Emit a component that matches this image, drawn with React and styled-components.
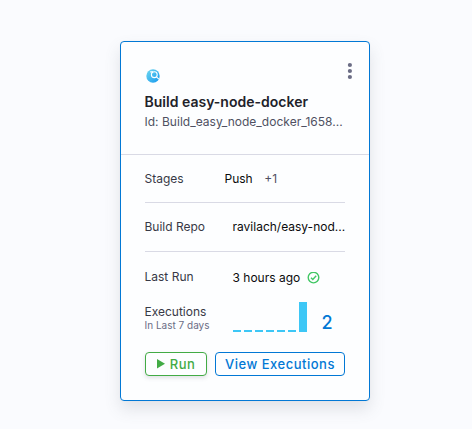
import React from "react";
import styled, { createGlobalStyle } from "styled-components";

const GlobalStyle = createGlobalStyle`
  *, *::before, *::after { box-sizing: border-box; }
  body {
    margin: 0;
    background: #fafbfe;
    font-family: Inter, "Liberation Sans", sans-serif;
    font-size: 12px;
    color: #0b0b0d;
  }
`;

const Page = styled.main`
  height: 429px;
  overflow: hidden;
  padding: 41px 0 0 120px;
`;

const Card = styled.article`
  display: flex;
  flex-direction: column;
  width: 250px;
  height: 360px;
  background: #fdfeff;
  border: 1px solid #0278d5;
  border-radius: 4px;
  box-shadow: 0 0 2px rgba(40, 41, 61, 0.04), 0 8px 16px rgba(96, 97, 112, 0.16);
`;

const Header = styled.header`
  height: 113px;
  padding: 20px 16px 0 24px;
  border-bottom: 1px solid #d9dae5;
`;

const HeaderTop = styled.div`
  display: flex;
  justify-content: space-between;
  height: 30px;
`;

const PipelineIcon = styled.svg`
  width: 14px;
  height: 14px;
  margin: 7px 0 0 1px;
`;

const MenuButton = styled.button`
  display: flex;
  width: 7px;
  height: 18px;
  margin: 0;
  padding: 0;
  border: 0;
  background: none;
`;

const Title = styled.h1`
  margin: 0;
  text-indent: -0.5px;
  font-size: 14px;
  line-height: 20px;
  font-weight: 600;
  letter-spacing: 0.01px;
  color: #22222a;
  white-space: nowrap;
`;

const Identifier = styled.p`
  width: 200px;
  margin: 0;
  text-indent: -0.5px;
  font-size: 12px;
  line-height: 20px;
  letter-spacing: 0.02px;
  color: #4f5162;
  white-space: nowrap;
`;

const Body = styled.div`
  padding: 0 24px;
`;

const Row = styled.div`
  display: flex;
  align-items: center;
  height: ${(p) => p.$height}px;
  border-bottom: ${(p) => (p.$divided ? "1px solid #d9dae5" : "0")};
  white-space: nowrap;
`;

const Label = styled.span`
  flex: none;
  width: ${(p) => p.$width || 88}px;
  padding-top: ${(p) => p.$offset || 0}px;
  text-indent: -0.5px;
  line-height: 16px;
  font-size: 12px;
  color: #383946;
`;

const Value = styled.span`
  font-size: 12px;
  line-height: 16px;
  text-indent: -0.5px;
  color: #0b0b0d;
`;

const MoreStages = styled(Value)`
  margin-left: 12px;
  color: #4f5162;
`;

const LastRun = styled.div`
  display: flex;
  align-items: center;
  gap: 7px;
  padding-top: 2px;
`;

const Caption = styled.small`
  display: block;
  font-size: 10px;
  line-height: 11px;
  color: #6b6d85;
`;

const Chart = styled.div`
  display: flex;
  align-items: flex-end;
  gap: 3px;
  height: 30px;
`;

const Bar = styled.span`
  width: 8px;
  height: ${(p) => (p.$filled ? 30 : 2)}px;
  background: #3dc7f6;
`;

const Total = styled.strong`
  margin: 12px 0 0 14.5px;
  font-size: 18px;
  line-height: 22px;
  font-weight: 500;
  color: #0278d5;
`;

const Actions = styled.footer`
  display: flex;
  gap: 8px;
  padding-top: 20px;
`;

const Button = styled.button`
  display: flex;
  align-items: center;
  justify-content: center;
  gap: 5px;
  width: ${(p) => (p.$run ? 62 : 130)}px;
  height: 24px;
  margin: 0;
  padding: 0;
  font: 500 13px/16px Inter, "Liberation Sans", sans-serif;
  letter-spacing: 0.5px;
  white-space: nowrap;
  color: ${(p) => (p.$run ? "#42ab45" : "#0278d5")};
  background: #fdfeff;
  border: 1px solid currentColor;
  border-radius: 4px;
  box-shadow: ${(p) => (p.$run ? "0 2px 4px rgba(96, 97, 112, 0.18)" : "none")};
`;

const days = [0, 0, 0, 0, 0, 0, 2];

export default function App() {
  return (
    <>
      <GlobalStyle />
      <Page>
        <Card>
          <Header>
            <HeaderTop>
              <PipelineIcon viewBox="0 0 14 14">
                <defs>
                  <linearGradient id="ci" x1="0" y1="0" x2="1" y2="1">
                    <stop offset="0" stopColor="#70d9f0" />
                    <stop offset="1" stopColor="#1597ee" />
                  </linearGradient>
                </defs>
                <circle cx="7" cy="7" r="6.7" fill="url(#ci)" />
                <circle cx="8.3" cy="5.7" r="2.9" fill="none" stroke="#fff" strokeWidth="1.1" />
                <path d="M4.2 2.9h2.8M10.4 7.8l2.5 2.3" fill="none" stroke="#fff" strokeWidth="1.1" />
              </PipelineIcon>
              <MenuButton aria-label="Options">
                <svg width="7" height="18" fill="#6b6d85">
                  <circle cx="3.9" cy="3" r="2.1" />
                  <circle cx="3.9" cy="9" r="2.1" />
                  <circle cx="3.9" cy="15" r="2.1" />
                </svg>
              </MenuButton>
            </HeaderTop>
            <Title>Build easy-node-docker</Title>
            <Identifier>Id: Build_easy_node_docker_1658...</Identifier>
          </Header>
          <Body>
            <Row $height={48} $divided>
              <Label $width={80}>Stages</Label>
              <Value>Push</Value>
              <MoreStages>+1</MoreStages>
            </Row>
            <Row $height={49} $divided>
              <Label>Build Repo</Label>
              <Value>ravilach/easy-nod...</Value>
            </Row>
            <Row $height={50}>
              <Label>Last Run</Label>
              <LastRun>
                <Value>3 hours ago</Value>
                <svg width="13" height="12" fill="none" stroke="#42c765">
                  <circle cx="6.5" cy="5.6" r="5.3" strokeWidth="1.4" />
                  <path d="M4 5.7l1.8 1.8 3.4-3.7" strokeWidth="1.4" />
                </svg>
              </LastRun>
            </Row>
            <Row $height={30}>
              <Label $offset={1}>
                Executions
                <Caption>In Last 7 days</Caption>
              </Label>
              <Chart>
                {days.map((count, i) => (
                  <Bar key={i} $filled={count > 0} />
                ))}
              </Chart>
              <Total>2</Total>
            </Row>
            <Actions>
              <Button $run>
                <svg width="8" height="10" fill="currentColor">
                  <path d="M0 0L8 4.7 0 9.4z" />
                </svg>
                Run
              </Button>
              <Button>View Executions</Button>
            </Actions>
          </Body>
        </Card>
      </Page>
    </>
  );
}
